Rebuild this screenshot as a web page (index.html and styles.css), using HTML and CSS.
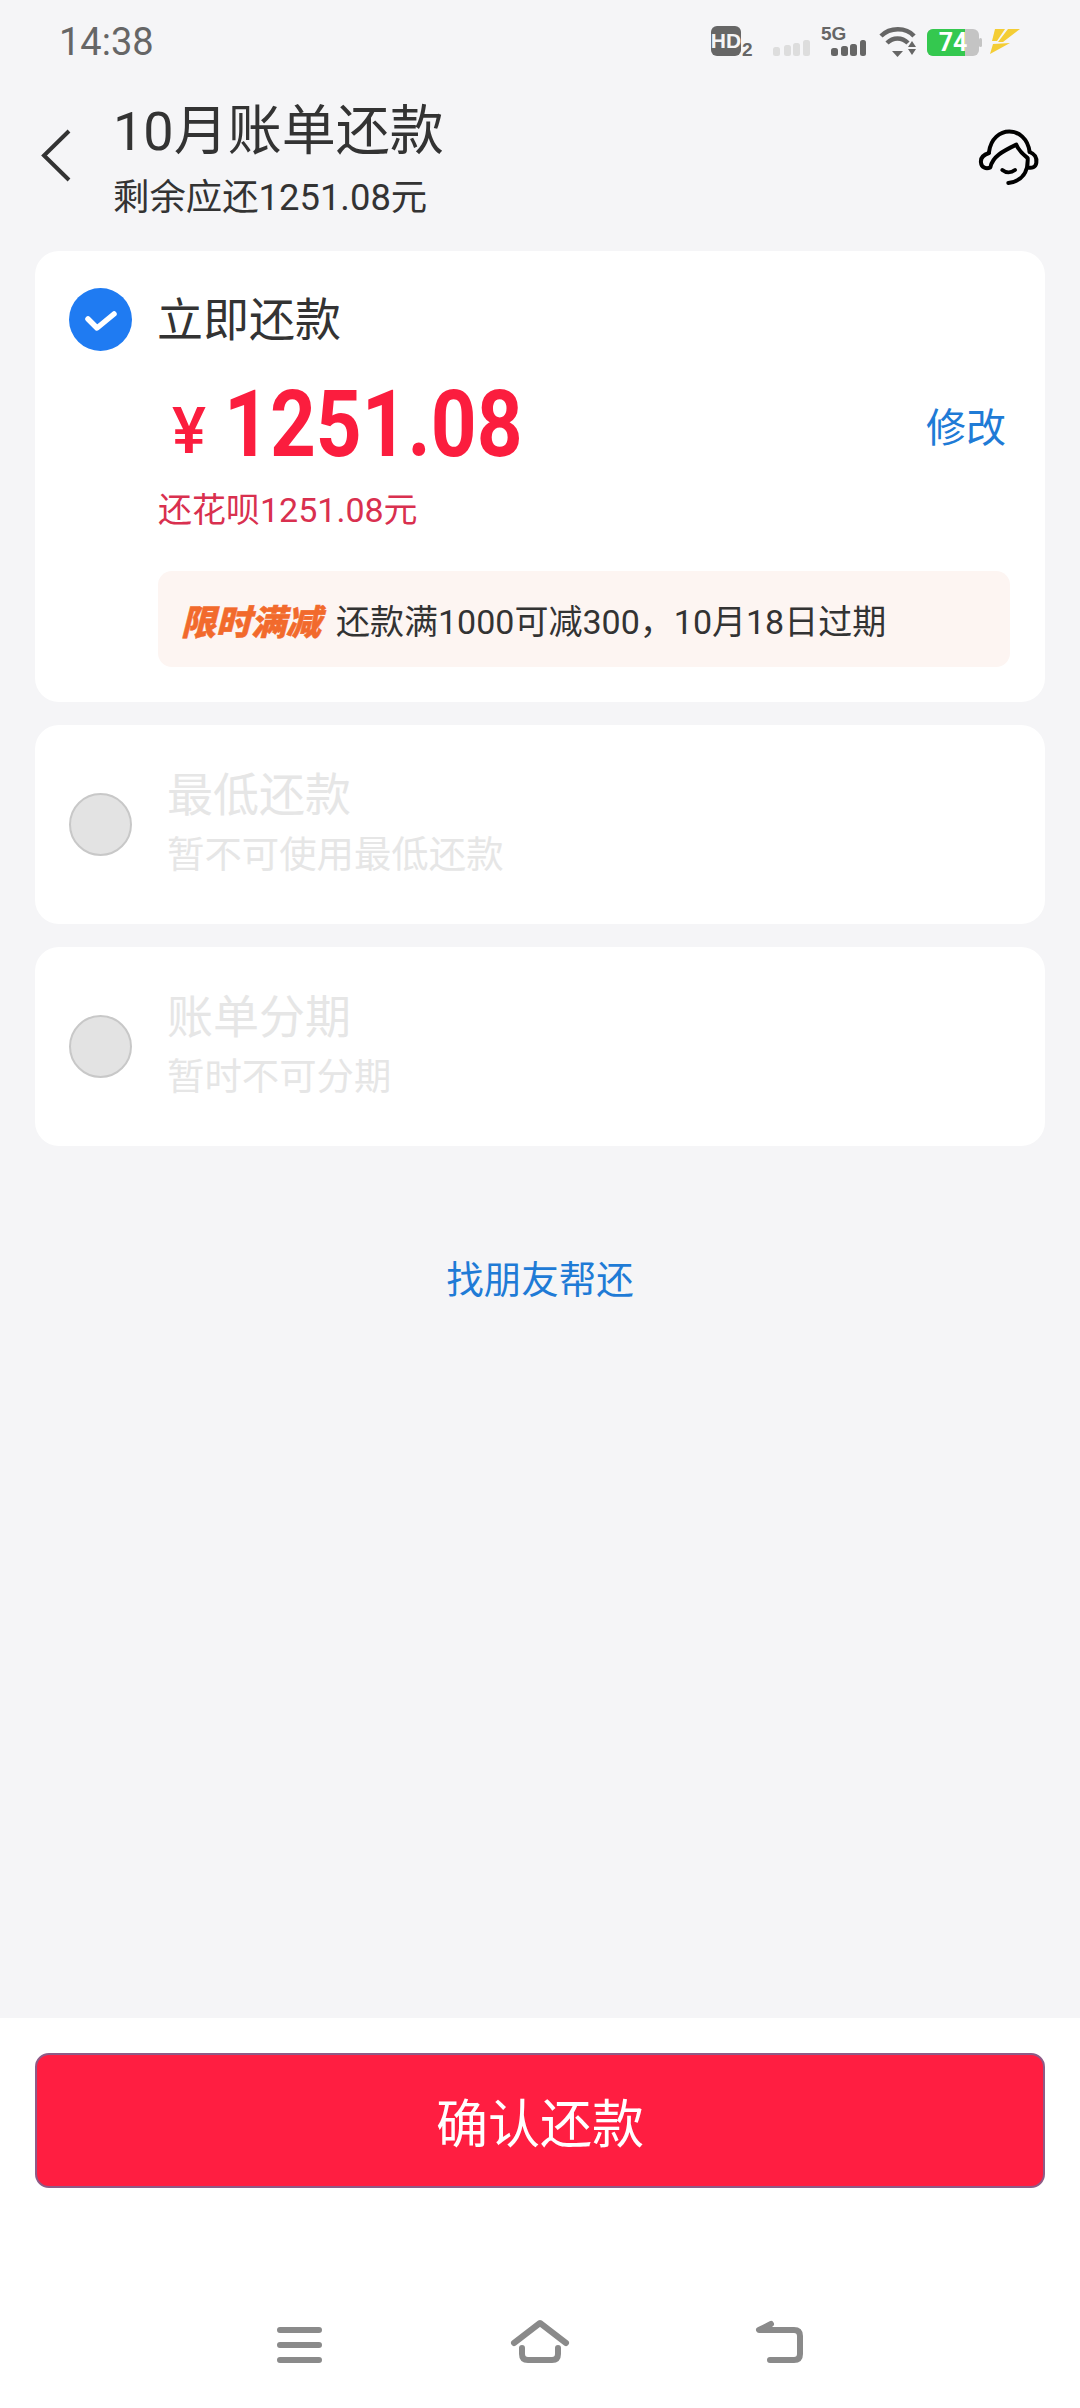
FILE: index.html
```html
<!DOCTYPE html>
<html lang="zh-CN">
<head>
    <meta charset="UTF-8">
    <meta name="viewport" content="width=device-width, initial-scale=1.0">
    <title>10月账单还款</title>
    <link rel="stylesheet" href="styles.css">
</head>
<body>
    <div class="status-bar">
        <span class="time">14:38</span>
        <svg class="status-icons" width="310" height="36" viewBox="711 25 310 36">
            <rect x="711" y="27" width="30" height="30" rx="6" fill="#666"/>
            <text x="726" y="49" class="st-hd">HD</text>
            <text x="742" y="57" class="st-two">2</text>
            <g fill="#ddd">
                <rect x="773" y="48" width="7" height="9" rx="2.5"/>
                <rect x="784" y="46" width="7" height="11" rx="2.5"/>
                <rect x="793" y="44" width="7" height="13" rx="2.5"/>
                <rect x="803" y="41" width="7" height="16" rx="2.5"/>
            </g>
            <text x="821" y="41" class="st-5g">5G</text>
            <g fill="#666">
                <rect x="831" y="49" width="7" height="8" rx="2.5"/>
                <rect x="841" y="47" width="7" height="10" rx="2.5"/>
                <rect x="850" y="45" width="7" height="12" rx="2.5"/>
                <rect x="860" y="41" width="6" height="16" rx="2.5"/>
            </g>
            <g fill="none" stroke="#666" stroke-width="4.5">
                <path d="M881 37 C890 28 906 28 914 37"/>
                <path d="M887 44 C893 38 902 38 908 44"/>
            </g>
            <path d="M892 52 h11 l-5.500 6 z" fill="#666"/>
            <path d="M912 42 l4 6 h-8 z M908 50 h8 l-4 6 z" fill="#666"/>
            <rect x="927" y="30" width="52" height="27" rx="6" fill="#c4c4c4"/>
            <rect x="979" y="39" width="3" height="9" rx="1.500" fill="#c4c4c4"/>
            <path d="M933 30 H965 V57 H933 a6 6 0 0 1 -6 -6 V36 a6 6 0 0 1 6 -6 z" fill="#34c84f"/>
            <text x="953" y="52" class="st-batt">74</text>
            <path d="M995 30 H1005 L997 42 H992 Z M1008 30 H1020 L1003 43 H998 Z M993 45 L1010 44 L990 55 Z" fill="#f4cd35"/>
        </svg>
    </div>

    <div class="header">
        <svg class="back" width="31" height="53" viewBox="0 0 31 53">
            <path d="M28 2 L3 26.500 L28 51" fill="none" stroke="#333" stroke-width="4"/>
        </svg>
        <div class="header-text">
            <div class="page-title">10月账单还款</div>
            <div class="page-sub">剩余应还1251.08元</div>
        </div>
        <svg class="service" width="64" height="59" viewBox="898 380 192 177">
            <g fill="none" stroke="#000" stroke-width="12" stroke-linecap="round" stroke-linejoin="round">
                <path d="M934 452 C945 370 1045 370 1056 452"/>
                <path d="M934 455 C918 460 908 470 910 484 C911 498 925 504 938 498 C945 465 975 450 1016 430 C1024 450 1040 462 1050 470 C1052 510 1035 540 992 545"/>
                <path d="M1056 452 C1072 458 1078 470 1076 484 C1074 498 1062 502 1050 498"/>
                <path d="M974 506 C985 515 1000 515 1012 506"/>
            </g>
        </svg>
    </div>

    <div class="main">
        <div class="card card-active">
            <div class="option-head">
                <svg class="radio-on" width="63" height="63" viewBox="0 0 63 63">
                    <circle cx="31.500" cy="31.500" r="31.500" fill="#1f7bf2"/>
                    <path d="M19 31 L28 40 L45 26" fill="none" stroke="#fff" stroke-width="5.500" stroke-linecap="round" stroke-linejoin="round"/>
                </svg>
                <span class="option-title">立即还款</span>
            </div>
            <div class="amount-row">
                <div class="amount"><span class="yen">¥</span><span class="num">1251.08</span></div>
                <span class="edit">修改</span>
            </div>
            <div class="amount-note">还花呗1251.08元</div>
            <div class="promo">
                <span class="promo-tag">限时满减</span>
                <span class="promo-text">还款满1000可减300，10月18日过期</span>
            </div>
        </div>

        <div class="card card-off">
            <span class="radio-off"></span>
            <div>
                <div class="off-title">最低还款</div>
                <div class="off-sub">暂不可使用最低还款</div>
            </div>
        </div>

        <div class="card card-off">
            <span class="radio-off"></span>
            <div>
                <div class="off-title">账单分期</div>
                <div class="off-sub">暂时不可分期</div>
            </div>
        </div>

        <div class="friend-link">找朋友帮还</div>
    </div>

    <div class="footer">
        <button class="confirm">确认还款</button>
        <div class="nav">
            <svg width="60" height="60" viewBox="270 2315 60 60">
                <path d="M280 2330 H319 M280 2345 H319 M280 2360 H319" fill="none" stroke="#8a8a8a" stroke-width="6" stroke-linecap="round"/>
            </svg>
            <svg width="60" height="60" viewBox="510 2315 60 60">
                <path d="M514 2343 L540 2323 L566 2343" fill="none" stroke="#8a8a8a" stroke-width="6" stroke-linecap="round" stroke-linejoin="round"/>
                <path d="M522 2348 V2354 Q522 2360 528 2360 H552 Q558 2360 558 2354 V2348" fill="none" stroke="#8a8a8a" stroke-width="6" stroke-linecap="round"/>
            </svg>
            <svg width="60" height="60" viewBox="750 2315 60 60">
                <path d="M771 2324 L759 2330 H794 Q800 2330 800 2336 V2354 Q800 2360 794 2360 H770" fill="none" stroke="#8a8a8a" stroke-width="6" stroke-linecap="round" stroke-linejoin="round"/>
            </svg>
        </div>
    </div>
</body>
</html>
```

FILE: styles.css
```css
* {
    box-sizing: border-box;
}
body {
    margin: 0;
    width: 1080px;
    height: 2408px;
    display: flex;
    flex-direction: column;
    background: #f5f5f7;
    color: #333;
    font-family: Roboto, "Noto Sans CJK SC", sans-serif;
}
.status-bar {
    height: 84px;
    padding: 0 59px 0 59px;
    display: flex;
    justify-content: space-between;
    align-items: center;
}
.time {
    font-size: 38px;
    color: #666;
}
.status-icons {
    display: block;
}
.st-hd {
    font: 700 21px "Liberation Sans", sans-serif;
    fill: #f5f5f7;
    text-anchor: middle;
}
.st-two {
    font: 700 19px "Liberation Sans", sans-serif;
    fill: #666;
}
.st-5g {
    font: 700 19px "Liberation Sans", sans-serif;
    fill: #666;
}
.st-batt {
    font: 700 25px Roboto, sans-serif;
    fill: #fff;
    text-anchor: middle;
}
.header {
    padding: 18px 39px 31px 41px;
    display: flex;
    align-items: flex-start;
}
.back {
    flex: none;
    margin: 27px 41px 0 0;
}
.header-text {
    flex: 1;
}
.page-title {
    font-size: 54px;
    line-height: 60px;
}
.page-sub {
    font-size: 36.400px;
    line-height: 44px;
    margin-top: 14px;
}
.service {
    flex: none;
    margin-top: 26px;
}
.main {
    flex: 1;
    padding: 0 35px;
}
.card {
    background: #fff;
    border-radius: 24px;
    margin-bottom: 23px;
}
.card-active {
    padding: 37px 35px 35px 34px;
}
.option-head {
    display: flex;
    align-items: center;
    gap: 25px;
}
.radio-on {
    flex: none;
}
.option-title {
    font-size: 46px;
    line-height: 50px;
}
.amount-row {
    margin-top: 23px;
    padding: 0 4px 0 103px;
    height: 100px;
    display: flex;
    justify-content: space-between;
    align-items: center;
}
.amount {
    color: #fb1d3e;
    display: flex;
    align-items: center;
}
.yen {
    font-size: 64px;
    font-weight: 500;
    margin: 14px 18px 0 0;
}
.num {
    display: inline-block;
    font-weight: 700;
    font-size: 93px;
    transform: scaleX(0.86);
    transform-origin: left center;
}
.edit {
    font-size: 40px;
    color: #1f7bd6;
    padding-top: 2px;
}
.amount-note {
    margin: 16px 0 0 89px;
    font-size: 34px;
    line-height: 40px;
    color: #d9304f;
}
.promo {
    margin: 41px 0 0 89px;
    height: 96px;
    padding-left: 23px;
    display: flex;
    align-items: center;
    gap: 15px;
    background: #fdf5f2;
    border-radius: 14px;
}
.promo-tag {
    font-size: 35px;
    font-weight: 900;
    font-style: italic;
    color: #f26a2c;
    -webkit-text-stroke: 0.5px #f26a2c;
}
.promo-text {
    font-size: 34px;
}
.card-off {
    height: 199px;
    padding-left: 34px;
    display: flex;
    align-items: center;
    gap: 35px;
}
.radio-off {
    flex: none;
    width: 63px;
    height: 63px;
    border-radius: 50%;
    background: #e3e3e3;
    border: 2px solid #c8c8c8;
}
.off-title {
    font-size: 46px;
    line-height: 60px;
    color: #e6e6e6;
}
.off-sub {
    font-size: 37.400px;
    line-height: 60px;
    color: #e6e6e6;
}
.friend-link {
    margin-top: 114px;
    text-align: center;
    font-size: 37.500px;
    line-height: 40px;
    color: #1f7bd6;
}
.footer {
    height: 390px;
    padding: 35px 35px 0;
    background: #fff;
}
.confirm {
    display: block;
    width: 100%;
    height: 135px;
    background: #ff1e41;
    border: 2px solid #8f5a86;
    border-radius: 14px;
    color: #fff;
    font-family: inherit;
    font-size: 52px;
}
.nav {
    margin-top: 127px;
    display: flex;
    justify-content: center;
    gap: 180px;
}
.nav svg {
    display: block;
}
```
